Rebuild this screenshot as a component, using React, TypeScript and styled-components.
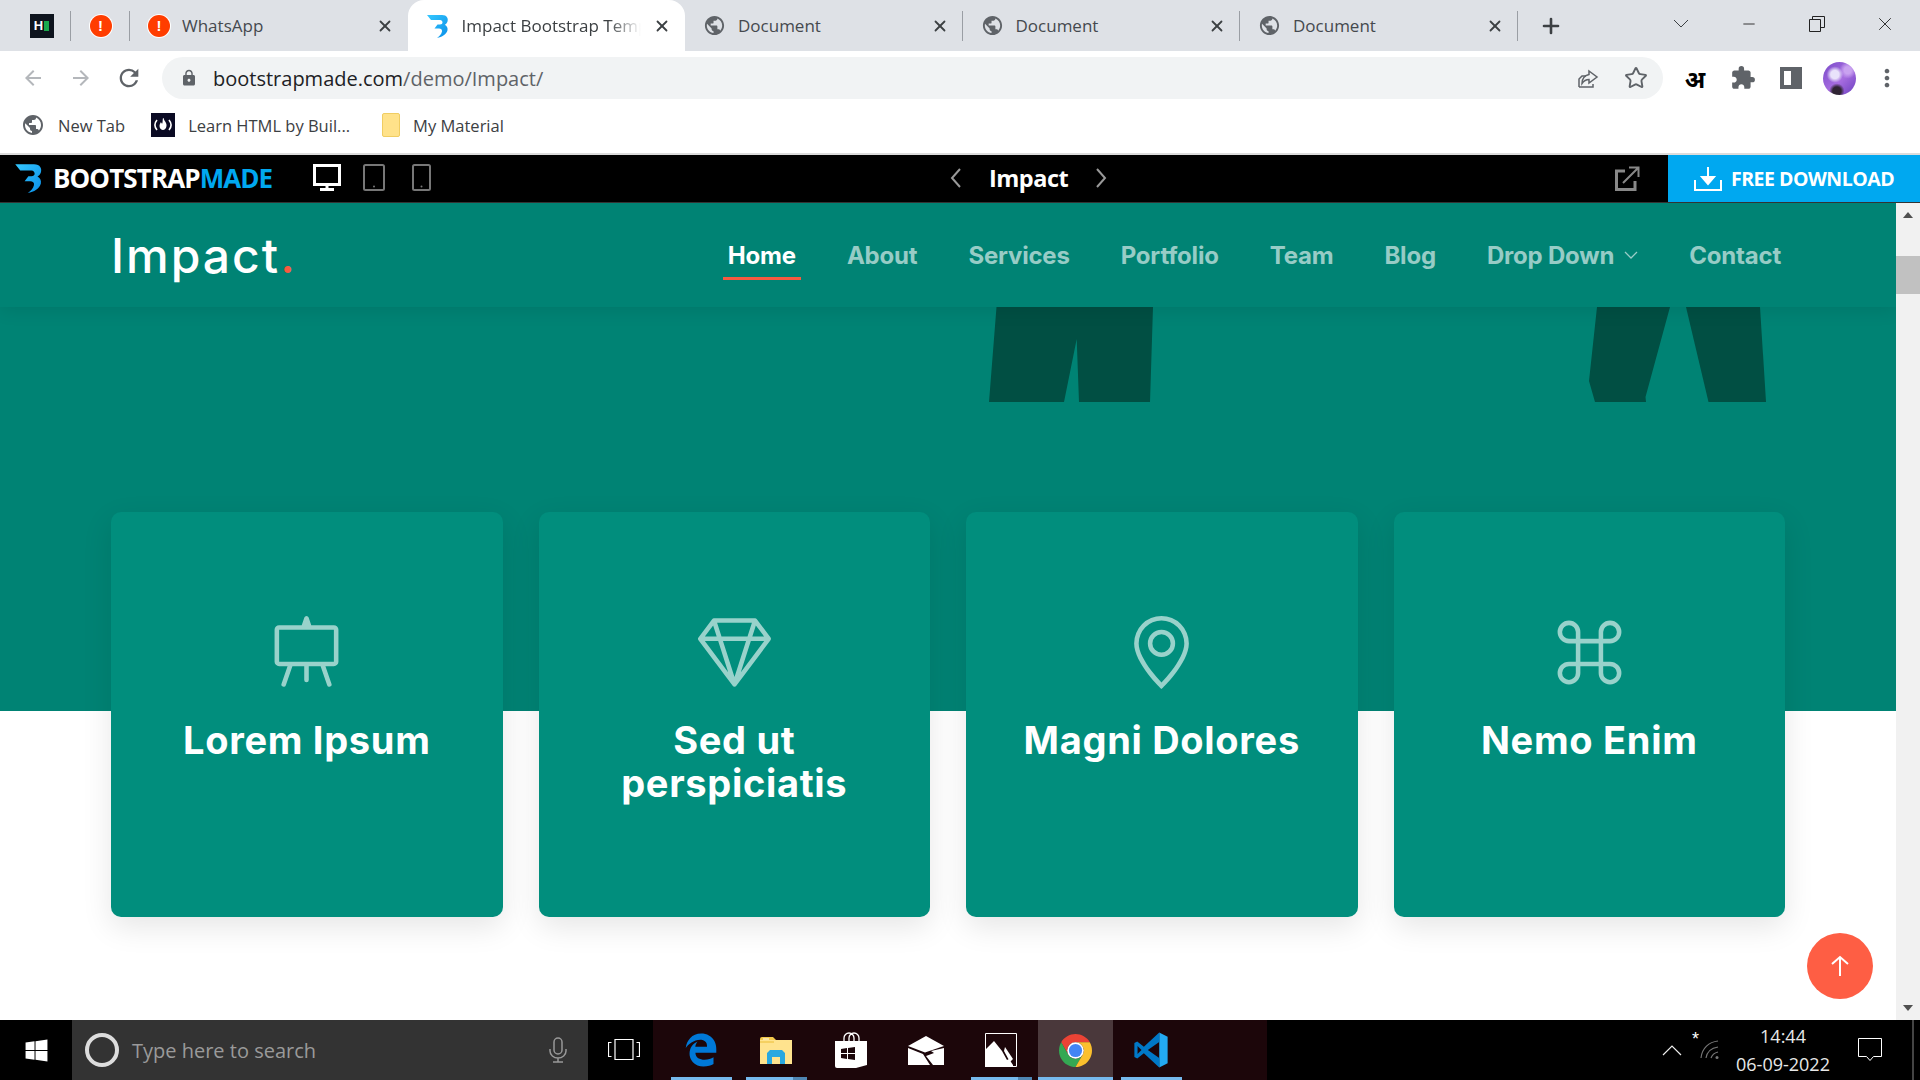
import styled, { createGlobalStyle } from 'styled-components';
import { Minus, Plus, Star, X } from 'lucide-react';
import { BsCommand, BsEasel, BsGem, BsGeoAlt } from 'react-icons/bs';
import { FaEdgeLegacy, FaWindows } from 'react-icons/fa';
import {
  MdArrowBack,
  MdArrowForward,
  MdExtension,
  MdLock,
  MdMoreVert,
  MdPublic,
  MdRefresh,
} from 'react-icons/md';

const GlobalStyle = createGlobalStyle`
  html, body {
    margin: 0;
    height: 100%;
    overflow: hidden;
    background: #fff;
  }
  * { box-sizing: border-box; }
`;

const uiFont = `"Open Sans", "Noto Sans", "Liberation Sans", sans-serif`;

function ImpactFavicon({ size = 24 }: { size?: number }) {
  return (
    <svg width={size} height={size} viewBox='0 0 24 24'>
      <defs>
        <linearGradient id='bm' x1='0' y1='0' x2='1' y2='1'>
          <stop offset='0' stopColor='#35c8ff' />
          <stop offset='1' stopColor='#0a8fe8' />
        </linearGradient>
      </defs>
      <path
        d='M1 1h15c5 0 6.5 3.5 5.5 6.5-.5 1.5-1.5 2.6-2.7 3.2 2 1 3.2 3 2.7 5.6C20.5 20.5 16 23 11 24c2-1.5 4.5-3.5 5-6.5.3-2-1-3-3-3H8.5l3-4H14c1.5 0 2.5-.8 2.5-2S15.5 6 14 6H5z'
        fill='url(#bm)'
      />
    </svg>
  );
}

function ChromeLogo() {
  return (
    <svg width='33' height='33' viewBox='4 4 40 40'>
      <path d='M6.68 14A20 20 0 0 1 41.32 14H24a10 10 0 0 0-8.66 15z' fill='#ea4335' />
      <path d='M6.68 14A20 20 0 0 0 24 44l8.66-15a10 10 0 0 1-17.32 0z' fill='#34a853' />
      <path d='M41.32 14A20 20 0 0 1 24 44l8.66-15A10 10 0 0 0 24 14z' fill='#fbc02d' />
      <circle cx='24' cy='24' r='10' fill='#fff' />
      <circle cx='24' cy='24' r='8' fill='#4285f4' />
    </svg>
  );
}

function ExplorerIcon() {
  return (
    <svg width='32' height='27' viewBox='0 0 32 27'>
      <path d='M0 2a2 2 0 0 1 2-2h11l3 3H0z' fill='#f2c94c' />
      <path d='M0 3h32v24H0z' fill='#ffe38e' />
      <path d='M0 4h14v2H0z' fill='#f5d061' />
      <path d='M3 1.5h6v1H3z' fill='#fff' />
      <path d='M7 27V16l3-3h12l3 3v11h-5v-7h-8v7z' fill='#29a8e0' />
    </svg>
  );
}

function StoreIcon() {
  return (
    <svg width='32' height='36' viewBox='0 0 32 36'>
      <path
        d='M9 9V6a5 5 0 0 1 10 0v3M14 9V6a5 5 0 0 1 10 0v3'
        fill='none'
        stroke='#fff'
        strokeWidth='1.3'
      />
      <path d='M0 9h32v24l-11 3H2a2 2 0 0 1-2-2z' fill='#fff' />
      <path d='M6 17l6-1v5H6zM13 16l7-1v6h-7zM6 22h6v5l-6-1zM13 22h7v6l-7-1z' fill='#1c060a' />
    </svg>
  );
}

function MailIcon() {
  return (
    <svg width='36' height='29' viewBox='0 0 36 29'>
      <path d='M0 10L18 0l18 10-19 6.5z' fill='#fff' />
      <path d='M0 12l15 6 7 11H0zM36 12v17H25l-7-9 8-3-3-2z' fill='#fff' />
    </svg>
  );
}

function PhotosIcon() {
  return (
    <svg width='32' height='34' viewBox='0 0 32 34'>
      <path d='M.5.5h31v33H.5z' fill='#1c060a' stroke='#fff' />
      <path d='M0 34V17l9-9 8 10 5 9 2-1 4 6v2z' fill='#fff' />
      <path d='M20 14l8 12-3 3-6-11z' fill='#fff' />
    </svg>
  );
}

function VsCodeIcon() {
  return (
    <svg width='38' height='38' viewBox='0 0 24 24'>
      <path d='M17.2 1l5.3 2.6v16.8L17.2 23z' fill='#23a9f1' />
      <path
        d='M17.2 1L7.5 10 3.3 6.7l-1.8.9v8.8l1.8.9L7.5 14l9.7 9v-6l-7.2-5 7.2-5z'
        fill='#0078c7'
      />
      <path d='M3.5 9.5L6 12l-2.5 2.5z' fill='#1c060a' />
    </svg>
  );
}

function CampIcon() {
  return (
    <svg width='24' height='24' viewBox='0 0 24 24'>
      <rect width='24' height='24' fill='#0a0a23' />
      <path d='M6 7c-2.5 3-2.5 7 0 10M18 7c2.5 3 2.5 7 0 10' fill='none' stroke='#fff' strokeWidth='1.6' />
      <path d='M12.5 5c.5 3 3.5 4.5 3 8-.3 2.5-2 4-3.5 4s-3.5-1.5-3.5-4c0-2 1-3 1.5-4 .3 1 .8 1.5 1.3 1.5.5-1.5.2-3.5.7-5.5z' fill='#fff' />
    </svg>
  );
}

const cards = [
  { title: 'Lorem Ipsum', Icon: BsEasel },
  { title: 'Sed ut perspiciatis', Icon: BsGem },
  { title: 'Magni Dolores', Icon: BsGeoAlt },
  { title: 'Nemo Enim', Icon: BsCommand },
];

const navLinks = ['Home', 'About', 'Services', 'Portfolio', 'Team', 'Blog'];

export default function App() {
  return (
    <Screen>
      <GlobalStyle />

      <TabStrip>
        <PinnedTab>
          <HackerFavicon>
            <span>H</span>
            <i />
          </HackerFavicon>
        </PinnedTab>
        <PinnedTab>
          <AlertFavicon>!</AlertFavicon>
        </PinnedTab>
        <Tab>
          <AlertFavicon>!</AlertFavicon>
          <TabTitle>WhatsApp</TabTitle>
          <TabClose size={18} strokeWidth={2.4} />
        </Tab>
        <Tab $active>
          <ImpactFavicon />
          <TabTitle $fade>Impact Bootstrap Template</TabTitle>
          <TabClose size={18} strokeWidth={2.4} />
        </Tab>
        <Tab>
          <MdPublic size={23} color='#5f6368' />
          <TabTitle>Document</TabTitle>
          <TabClose size={18} strokeWidth={2.4} />
        </Tab>
        <Tab>
          <MdPublic size={23} color='#5f6368' />
          <TabTitle>Document</TabTitle>
          <TabClose size={18} strokeWidth={2.4} />
        </Tab>
        <Tab>
          <MdPublic size={23} color='#5f6368' />
          <TabTitle>Document</TabTitle>
          <TabClose size={18} strokeWidth={2.4} />
        </Tab>
        <NewTab>
          <Plus size={24} strokeWidth={2.6} />
        </NewTab>
        <WindowControls>
          <WindowButton>
            <svg width='16' height='10' viewBox='0 0 16 10'>
              <path d='M1 1l7 7 7-7' fill='none' stroke='#3c4043' />
            </svg>
          </WindowButton>
          <WindowButton>
            <Minus size={18} strokeWidth={1.2} />
          </WindowButton>
          <WindowButton>
            <svg width='16' height='16' viewBox='0 0 16 16'>
              <path
                d='M.5 3.5h11v12H.5zM3.5 3.5v-3h12v11h-4'
                fill='none'
                stroke='#222'
              />
            </svg>
          </WindowButton>
          <WindowButton>
            <X size={22} strokeWidth={1} />
          </WindowButton>
        </WindowControls>
      </TabStrip>

      <Toolbar>
        <ToolButton $muted>
          <MdArrowBack size={24} />
        </ToolButton>
        <ToolButton $muted>
          <MdArrowForward size={24} />
        </ToolButton>
        <ToolButton>
          <MdRefresh size={28} />
        </ToolButton>
        <Omnibox>
          <MdLock size={18} color='#5f6368' />
          <Url>
            bootstrapmade.com<span>/demo/Impact/</span>
          </Url>
          <ToolButton>
            <svg width='24' height='24' viewBox='0 0 24 24' fill='none' stroke='#5f6368' strokeWidth='1.5'>
              <path d='M3 21v-8l3-3h4M3 21h14v-3' />
              <path d='M13 5l8 6-8 6v-3.5c-3 0-5 1-7 4 0-5 3-8 7-9z' />
            </svg>
          </ToolButton>
          <ToolButton>
            <Star size={24} strokeWidth={1.9} />
          </ToolButton>
        </Omnibox>
        <ToolButton $dark>
          <Hindi>अ</Hindi>
        </ToolButton>
        <ToolButton>
          <MdExtension size={26} />
        </ToolButton>
        <ToolButton>
          <SidePanel />
        </ToolButton>
        <ToolButton>
          <Avatar />
        </ToolButton>
        <ToolButton>
          <MdMoreVert size={28} />
        </ToolButton>
      </Toolbar>

      <Bookmarks>
        <Bookmark>
          <MdPublic size={24} color='#5f6368' />
          New Tab
        </Bookmark>
        <Bookmark>
          <CampIcon />
          Learn HTML by Buil...
        </Bookmark>
        <Bookmark>
          <FolderGlyph />
          My Material
        </Bookmark>
      </Bookmarks>

      <PreviewBar>
        <PreviewLeft>
          <ImpactFavicon size={30} />
          <Brand>
            BOOTSTRAP<span>MADE</span>
          </Brand>
          <Devices>
            <svg width='28' height='27' viewBox='0 0 28 27' fill='none' stroke='#fff'>
              <path d='M1.5 1.5h25v19h-25z' strokeWidth='3' />
              <path d='M14 21v4M7 25.5h14' strokeWidth='3' />
            </svg>
            <svg width='22' height='27' viewBox='0 0 22 27'>
              <rect x='1' y='1' width='20' height='25' rx='1.5' fill='none' stroke='#777' strokeWidth='2' />
              <circle cx='11' cy='22.5' r='1' fill='#777' />
            </svg>
            <svg width='19' height='27' viewBox='0 0 19 27'>
              <rect x='1' y='1' width='17' height='25' rx='1.5' fill='none' stroke='#777' strokeWidth='2' />
              <circle cx='9.5' cy='22.5' r='1' fill='#777' />
            </svg>
          </Devices>
        </PreviewLeft>
        <Switcher>
          <svg width='12' height='20' viewBox='0 0 12 20'>
            <path d='M10 1L2 10l8 9' fill='none' stroke='#999' strokeWidth='2' />
          </svg>
          <SwitcherName>Impact</SwitcherName>
          <svg width='12' height='20' viewBox='0 0 12 20'>
            <path d='M2 1l8 9-8 9' fill='none' stroke='#999' strokeWidth='2' />
          </svg>
        </Switcher>
        <ExternalLink>
          <svg width='25' height='25' viewBox='0 0 25 25' fill='none' stroke='#888'>
            <path d='M10 5H1.5v18.5H20V15' strokeWidth='3' />
            <path d='M8 17L23 2M14 1.5h9.5V11' strokeWidth='2' />
          </svg>
        </ExternalLink>
        <DownloadButton>
          <svg width='28' height='26' viewBox='0 0 28 26' fill='none' stroke='#fff' strokeWidth='2'>
            <path d='M1 14v10h26V14' />
            <path d='M14 1v15' />
            <path d='M8 11h12l-6 7z' fill='#fff' />
          </svg>
          FREE DOWNLOAD
        </DownloadButton>
      </PreviewBar>

      <Viewport>
        <Page>
          <Header>
            <Logo>
              Impact<span>.</span>
            </Logo>
            <Nav>
              {navLinks.map((link) => (
                <NavLink key={link} $active={link === 'Home'}>
                  {link}
                </NavLink>
              ))}
              <NavLink>
                Drop Down
                <svg width='14' height='8' viewBox='0 0 14 8'>
                  <path d='M1 1l6 6 6-6' fill='none' stroke='rgba(255,255,255,.6)' strokeWidth='1.3' />
                </svg>
              </NavLink>
              <NavLink>Contact</NavLink>
            </Nav>
          </Header>

          <Hero>
            <svg width='164' height='95' viewBox='0 0 164 95'>
              <path d='M7.5 0H164l-3 95H90L87.7 32 75 95H0z' fill='#014f43' />
            </svg>
            <svg width='177' height='95' viewBox='0 0 177 95'>
              <path d='M8 0h73L56.5 90l.5 5H6L0 74z' fill='#014f43' />
              <path d='M97 0h74l6 95h-57.5z' fill='#014f43' />
            </svg>
          </Hero>

          <CardRow>
            {cards.map(({ title, Icon }) => (
              <Card key={title}>
                <CardIcon>
                  <Icon size={73} />
                </CardIcon>
                <CardTitle>{title}</CardTitle>
              </Card>
            ))}
          </CardRow>

          <BackToTop>
            <svg width='20' height='22' viewBox='0 0 20 22' fill='none' stroke='#fff' strokeWidth='2'>
              <path d='M10 21V2M2 9l8-7 8 7' />
            </svg>
          </BackToTop>
        </Page>

        <Scrollbar>
          <ScrollArrow />
          <ScrollThumb />
          <ScrollArrow $down />
        </Scrollbar>
      </Viewport>

      <Taskbar>
        <StartButton>
          <FaWindows size={25} />
        </StartButton>
        <SearchBox>
          <Cortana />
          <SearchText>Type here to search</SearchText>
          <svg width='18' height='26' viewBox='0 0 18 26' fill='none' stroke='#999' strokeWidth='1.5'>
            <rect x='5' y='1' width='8' height='16' rx='4' />
            <path d='M1 12v2a8 7 0 0 0 16 0v-2M9 21v4M4 25h10' />
          </svg>
        </SearchBox>
        <TaskView>
          <svg width='32' height='22' viewBox='0 0 32 22' fill='none' stroke='#fff' strokeWidth='1.2'>
            <path d='M7 .5h18v20H7z' />
            <path d='M3.5 3.5h-3v14h3M28.5 3.5h3v14h-3' />
          </svg>
        </TaskView>
        <Apps>
          <AppButton $open>
            <FaEdgeLegacy size={34} color='#0078d7' />
          </AppButton>
          <AppButton $open $stacked>
            <ExplorerIcon />
          </AppButton>
          <AppButton>
            <StoreIcon />
          </AppButton>
          <AppButton>
            <MailIcon />
          </AppButton>
          <AppButton $open $stacked>
            <PhotosIcon />
          </AppButton>
          <AppButton $open $active>
            <ChromeLogo />
          </AppButton>
          <AppButton $open>
            <VsCodeIcon />
          </AppButton>
        </Apps>
        <Tray>
          <svg width='20' height='11' viewBox='0 0 20 11'>
            <path d='M1 10l9-9 9 9' fill='none' stroke='#eee' strokeWidth='1.2' />
          </svg>
          <Network>
            <NetworkStar>*</NetworkStar>
            <svg width='22' height='20' viewBox='0 0 22 20' fill='none' stroke='#777' strokeWidth='1.2'>
              <path d='M1 18C2 8 9 2 18 1M6 18c1-6 5-10 12-11M11 18c1-3 3-5 7-6' />
              <circle cx='17' cy='17.5' r='1.5' fill='#777' stroke='none' />
            </svg>
          </Network>
          <Clock>
            <span>14:44</span>
            <span>06-09-2022</span>
          </Clock>
          <svg width='24' height='24' viewBox='0 0 24 24'>
            <path d='M.5.5h23v18h-8l-3.5 4-3.5-4h-8z' fill='none' stroke='#fff' />
          </svg>
          <TrayEdge />
        </Tray>
      </Taskbar>
    </Screen>
  );
}

const Screen = styled.div`
  width: 1920px;
  height: 1080px;
  display: flex;
  flex-direction: column;
  overflow: hidden;
  font-family: ${uiFont};
`;

const TabStrip = styled.div`
  height: 51px;
  flex: none;
  display: flex;
  padding-left: 12px;
  background: #dee1e6;
`;

const PinnedTab = styled.div`
  width: 59px;
  display: flex;
  align-items: center;
  justify-content: center;
  position: relative;

  &::after {
    content: '';
    position: absolute;
    right: 0;
    top: 11px;
    height: 30px;
    width: 1px;
    background: #9a9ea4;
  }
`;

const HackerFavicon = styled.div`
  width: 24px;
  height: 24px;
  display: flex;
  align-items: center;
  justify-content: center;
  gap: 1px;
  background: #0e141e;
  color: #fff;
  font: 800 13px 'Liberation Sans', sans-serif;

  i {
    width: 5px;
    height: 10px;
    background: #1ba94c;
  }
`;

const AlertFavicon = styled.div`
  width: 22px;
  height: 22px;
  flex: none;
  border-radius: 50%;
  background: #ff3d00;
  box-shadow: 0 0 0 1px #fff;
  color: #fff;
  font: 700 15px/22px 'Liberation Sans', sans-serif;
  text-align: center;
`;

const Tab = styled.div<{ $active?: boolean }>`
  width: 277.5px;
  display: flex;
  align-items: center;
  gap: 12px;
  padding: 0 14px 0 18px;
  position: relative;
  color: ${(p) => (p.$active ? '#3c4043' : '#45494e')};
  background: ${(p) => (p.$active ? '#fff' : 'transparent')};
  border-radius: ${(p) => (p.$active ? '16px 16px 0 0' : '0')};

  &::after {
    content: '';
    position: absolute;
    right: 0;
    top: 11px;
    height: 30px;
    width: 1px;
    background: ${(p) => (p.$active ? 'transparent' : '#9a9ea4')};
  }

  &:nth-child(3)::after {
    background: transparent;
  }
`;

const TabTitle = styled.div<{ $fade?: boolean }>`
  flex: 1;
  min-width: 0;
  white-space: nowrap;
  overflow: hidden;
  font-size: 17px;
  ${(p) =>
    p.$fade &&
    'mask-image: linear-gradient(to right, #000 82%, transparent 100%);'}
`;

const TabClose = styled(X)`
  flex: none;
  color: #3c4043;
`;

const NewTab = styled.div`
  width: 66px;
  display: flex;
  align-items: center;
  justify-content: center;
  color: #3c4043;
`;

const WindowControls = styled.div`
  margin-left: auto;
  display: flex;
  padding-bottom: 4px;
  padding-right: 1px;
`;

const WindowButton = styled.div`
  width: 68px;
  display: flex;
  align-items: center;
  justify-content: center;
  color: #222;
`;

const Toolbar = styled.div`
  height: 51px;
  flex: none;
  display: flex;
  align-items: center;
  padding: 3px 9px 0 9px;
  background: #fff;
`;

const ToolButton = styled.div<{ $muted?: boolean; $dark?: boolean }>`
  width: 48px;
  height: 42px;
  flex: none;
  display: flex;
  align-items: center;
  justify-content: center;
  color: ${(p) => (p.$muted ? '#b4b7bb' : p.$dark ? '#000' : '#5f6368')};
`;

const Omnibox = styled.div`
  flex: 1;
  height: 42px;
  margin: 0 8px 0 9px;
  padding: 0 3px 0 18px;
  display: flex;
  align-items: center;
  gap: 15px;
  border-radius: 21px;
  background: #f1f3f4;

  ${ToolButton} + ${ToolButton} {
    margin-left: -15px;
  }
`;

const Url = styled.div`
  flex: 1;
  font-size: 20px;
  color: #202124;
  white-space: nowrap;

  span {
    color: #5f6368;
  }
`;

const Hindi = styled.span`
  font: 700 24px 'Noto Sans', 'DejaVu Sans', sans-serif;
`;

const SidePanel = styled.div`
  width: 22px;
  height: 22px;
  border: 4px solid #5f6368;
  border-right-width: 11px;
`;

const Avatar = styled.div`
  width: 33px;
  height: 33px;
  border-radius: 50%;
  background:
    radial-gradient(circle at 36% 38%, #e9e3fb 0 14%, transparent 28%),
    radial-gradient(circle at 42% 88%, #2f2433 0 12%, transparent 22%),
    radial-gradient(circle at 75% 25%, #c9a2f0 0 10%, transparent 24%),
    linear-gradient(135deg, #7a4bc9, #a76de0 55%, #6b3fbf);
`;

const Bookmarks = styled.div`
  height: 53px;
  flex: none;
  display: flex;
  align-items: center;
  gap: 26px;
  padding: 0 0 5px 21px;
  background: #fff;
  border-bottom: 2px solid #dcdcdc;
`;

const Bookmark = styled.div`
  display: flex;
  align-items: center;
  gap: 13px;
  font-size: 16.5px;
  color: #3c4043;
`;

const FolderGlyph = styled.div`
  width: 18px;
  height: 24px;
  margin-left: 6px;
  border: 1px solid #f0cd62;
  border-radius: 2px;
  background: #ffe28a;
`;

const PreviewBar = styled.div`
  height: 48px;
  flex: none;
  display: flex;
  align-items: center;
  background: #000;
  border-bottom: 1px solid #333;
`;

const PreviewLeft = styled.div`
  width: 950px;
  flex: none;
  display: flex;
  align-items: center;
  padding: 0 0 2px 14px;
`;

const Brand = styled.div`
  margin-left: 9px;
  color: #fff;
  font: 700 26px ${uiFont};
  letter-spacing: -0.9px;

  span {
    color: #00a8f0;
  }
`;

const Devices = styled.div`
  display: flex;
  align-items: center;
  gap: 22px;
  margin-left: 41px;

  svg:last-child {
    margin-left: 5px;
  }
`;

const Switcher = styled.div`
  display: flex;
  align-items: center;
  gap: 27px;
  padding-bottom: 2px;
`;

const SwitcherName = styled.div`
  color: #fff;
  font: 700 23.5px ${uiFont};
  letter-spacing: -0.5px;
`;

const ExternalLink = styled.div`
  margin-left: auto;
  margin-right: 28px;
  display: flex;
`;

const DownloadButton = styled.div`
  width: 252px;
  height: 100%;
  display: flex;
  align-items: center;
  gap: 9px;
  padding-left: 26px;
  background: #00a8f0;
  color: #fff;
  font: 700 19.5px ${uiFont};
  letter-spacing: -0.5px;
  white-space: nowrap;
`;

const Viewport = styled.div`
  flex: 1;
  min-height: 0;
  display: flex;
`;

const Page = styled.div`
  flex: 1;
  min-width: 0;
  position: relative;
  overflow: hidden;
  background: #fff;
`;

const Header = styled.header`
  height: 104px;
  display: flex;
  align-items: center;
  justify-content: space-between;
  padding: 0 115px 0 111px;
  position: relative;
  z-index: 1;
  background: #008374;
  box-shadow: 0 2px 18px rgba(0, 0, 0, 0.1);
`;

const Logo = styled.div`
  color: #fff;
  font: 500 48px 'Inter', sans-serif;
  letter-spacing: 2px;

  span {
    color: #f85a40;
  }
`;

const Nav = styled.nav`
  display: flex;
  align-items: center;
  gap: 51px;
`;

const NavLink = styled.a<{ $active?: boolean }>`
  display: flex;
  align-items: center;
  gap: 10px;
  position: relative;
  color: ${(p) => (p.$active ? '#fff' : 'rgba(255, 255, 255, 0.6)')};
  font: 700 24px 'Inter', sans-serif;
  letter-spacing: -0.2px;
  white-space: nowrap;

  &::after {
    content: '';
    display: ${(p) => (p.$active ? 'block' : 'none')};
    position: absolute;
    left: -5px;
    right: -5px;
    bottom: -10px;
    height: 3px;
    background: #f85a40;
  }
`;

const Hero = styled.section`
  height: 404px;
  display: flex;
  align-items: flex-start;
  gap: 436px;
  padding-left: 989px;
  background: #008374;
`;

const CardRow = styled.div`
  display: grid;
  grid-template-columns: repeat(4, 1fr);
  gap: 36px;
  width: 1674px;
  margin: -199px 0 0 111px;
  position: relative;
`;

const Card = styled.div`
  height: 405px;
  padding: 104px 36px 0;
  border-radius: 10px;
  background: #018e7d;
  box-shadow: 0 10px 30px rgba(0, 0, 0, 0.1);
  text-align: center;
`;

const CardIcon = styled.div`
  display: flex;
  justify-content: center;
  color: rgba(255, 255, 255, 0.6);
`;

const CardTitle = styled.h4`
  margin: 30px 0 0;
  color: #fff;
  font: 700 38px/43px 'Inter', sans-serif;
  letter-spacing: 0.7px;
`;

const BackToTop = styled.div`
  position: absolute;
  right: 23px;
  bottom: 21px;
  width: 66px;
  height: 66px;
  display: flex;
  align-items: center;
  justify-content: center;
  border-radius: 50%;
  background: #fe5e44;
`;

const Scrollbar = styled.div`
  width: 24px;
  flex: none;
  display: flex;
  flex-direction: column;
  align-items: center;
  padding: 9px 0;
  background: #f1f1f1;
`;

const ScrollArrow = styled.div<{ $down?: boolean }>`
  width: 0;
  height: 0;
  border-left: 5.5px solid transparent;
  border-right: 5.5px solid transparent;
  border-${(p) => (p.$down ? 'top' : 'bottom')}: 6px solid #505050;
  margin-top: ${(p) => (p.$down ? 'auto' : '0')};
`;

const ScrollThumb = styled.div`
  width: 100%;
  height: 38px;
  margin-top: 38px;
  background: #c1c1c1;
`;

const Taskbar = styled.div`
  height: 60px;
  flex: none;
  display: flex;
  background: #000;
`;

const StartButton = styled.div`
  width: 72px;
  display: flex;
  align-items: center;
  justify-content: center;
  color: #fff;
`;

const SearchBox = styled.div`
  width: 516px;
  display: flex;
  align-items: center;
  padding: 0 21px 0 13px;
  background: #333;
`;

const Cortana = styled.div`
  width: 34px;
  height: 34px;
  border: 4px solid #ddd;
  border-radius: 50%;
`;

const SearchText = styled.div`
  flex: 1;
  margin-left: 13px;
  font-size: 20px;
  color: #9a9a9a;
`;

const TaskView = styled.div`
  width: 65px;
  display: flex;
  align-items: center;
  justify-content: center;
  padding-left: 6px;
`;

const Apps = styled.div`
  width: 614px;
  display: flex;
  padding-left: 10px;
  background: #1c060a;
`;

const AppButton = styled.div<{ $open?: boolean; $stacked?: boolean; $active?: boolean }>`
  width: 75px;
  display: flex;
  align-items: center;
  justify-content: center;
  position: relative;
  background: ${(p) => (p.$active ? '#4a383b' : 'transparent')};

  &::after {
    content: '';
    display: ${(p) => (p.$open ? 'block' : 'none')};
    position: absolute;
    left: ${(p) => (p.$active ? '0' : '8px')};
    right: ${(p) => (p.$active ? '0' : '6px')};
    bottom: 0;
    height: 3px;
    background: ${(p) =>
      p.$stacked
        ? 'linear-gradient(to right, #76b9ed 77%, #4f86b3 77%)'
        : '#76b9ed'};
  }
`;

const Tray = styled.div`
  flex: 1;
  display: flex;
  align-items: center;
  justify-content: flex-end;
  position: relative;
  padding-right: 38px;
`;

const Network = styled.div`
  margin-left: 10px;
  display: flex;
  align-items: flex-end;
  position: relative;
  padding-left: 8px;
`;

const NetworkStar = styled.span`
  position: absolute;
  left: 0;
  top: -11px;
  color: #fff;
  font: 400 18px 'Liberation Sans', sans-serif;
`;

const Clock = styled.div`
  width: 114px;
  margin: 0 18px 0 4px;
  display: flex;
  flex-direction: column;
  align-items: center;
  gap: 3px;
  color: #e8e8e8;
  font-size: 18px;
  line-height: 25px;
`;

const TrayEdge = styled.div`
  position: absolute;
  right: 6px;
  top: 0;
  bottom: 0;
  width: 2px;
  background: #444;
`;
